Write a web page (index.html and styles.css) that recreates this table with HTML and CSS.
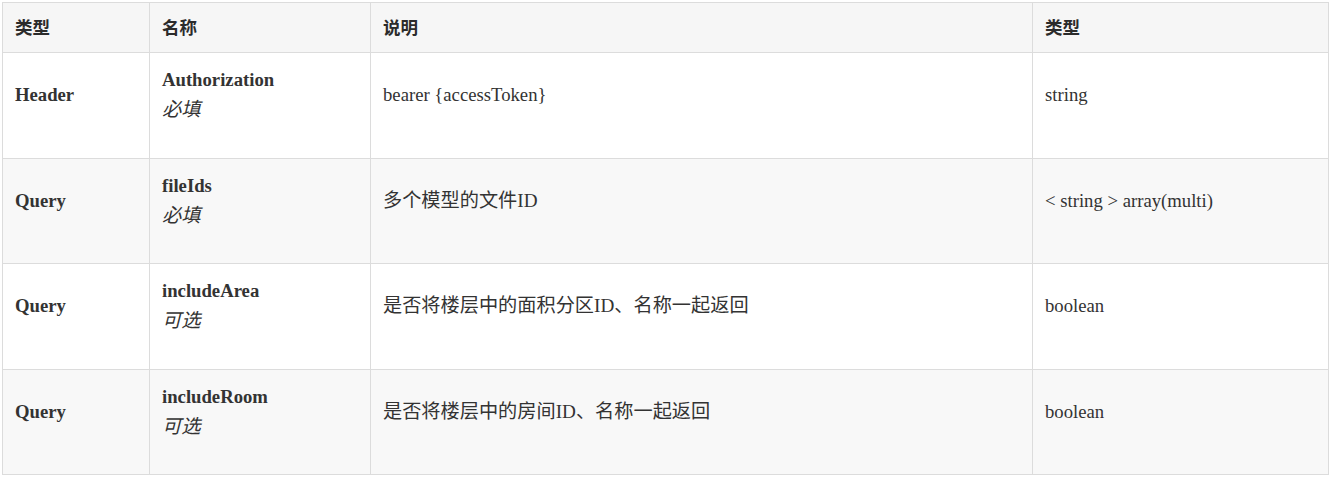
FILE: index.html
```html
<!DOCTYPE html>
<html lang="zh">
<head>
<meta charset="utf-8">
<link rel="stylesheet" href="styles.css">
</head>
<body>
<table class="params">
  <colgroup>
    <col class="c1"><col class="c2"><col class="c3"><col class="c4">
  </colgroup>
  <thead>
    <tr><th>类型</th><th>名称</th><th>说明</th><th>类型</th></tr>
  </thead>
  <tbody>
    <tr>
      <td class="kind">Header</td>
      <td class="name"><strong>Authorization</strong><br><em>必填</em></td>
      <td class="desc">bearer {accessToken}</td>
      <td class="type">string</td>
    </tr>
    <tr class="alt">
      <td class="kind">Query</td>
      <td class="name"><strong>fileIds</strong><br><em>必填</em></td>
      <td class="desc cjk">多个模型的文件ID</td>
      <td class="type">&lt; string &gt; array(multi)</td>
    </tr>
    <tr>
      <td class="kind">Query</td>
      <td class="name"><strong>includeArea</strong><br><em>可选</em></td>
      <td class="desc cjk">是否将楼层中的面积分区ID、名称一起返回</td>
      <td class="type">boolean</td>
    </tr>
    <tr class="alt">
      <td class="kind">Query</td>
      <td class="name"><strong>includeRoom</strong><br><em>可选</em></td>
      <td class="desc cjk">是否将楼层中的房间ID、名称一起返回</td>
      <td class="type">boolean</td>
    </tr>
  </tbody>
</table>
</body>
</html>
```
FILE: styles.css
```css
html, body {
  margin: 0;
  padding: 0;
  background: #ffffff;
}
body {
  padding: 2px 0 0 2px;
  font-family: "Liberation Serif", "Noto Sans CJK SC", serif;
  font-size: 18.7px;
  color: #333333;
}
.params {
  border-collapse: collapse;
  table-layout: fixed;
  width: 1326px;
  border: 1px solid #dcdcdc;
}
.c1 { width: 147px; }
.c2 { width: 221px; }
.c3 { width: 662px; }
.c4 { width: 296px; }
.params th,
.params td {
  border: 1px solid #dcdcdc;
  text-align: left;
  line-height: 28px;
  padding-left: 12px;
  padding-right: 12px;
}
.params th {
  background: #f6f6f6;
  font-family: "Noto Sans CJK SC", sans-serif;
  font-weight: 700;
  font-size: 17.5px;
  padding-top: 10px;
  padding-bottom: 11px;
  color: #2b2b2b;
}
.params td {
  padding-top: 13px;
  padding-bottom: 33.5px;
  vertical-align: middle;
}
.params tr.alt td {
  background: #f8f8f8;
}
.kind {
  font-weight: 700;
}
.name strong {
  font-weight: 700;
}
.name em {
  font-family: "Noto Sans CJK SC", sans-serif;
  font-style: italic;
  font-weight: 400;
  font-size: 19.3px;
}
.desc {
  font-family: "Liberation Serif", "Noto Sans CJK SC", serif;
}
.desc.cjk {
  font-size: 19.2px;
}
```
